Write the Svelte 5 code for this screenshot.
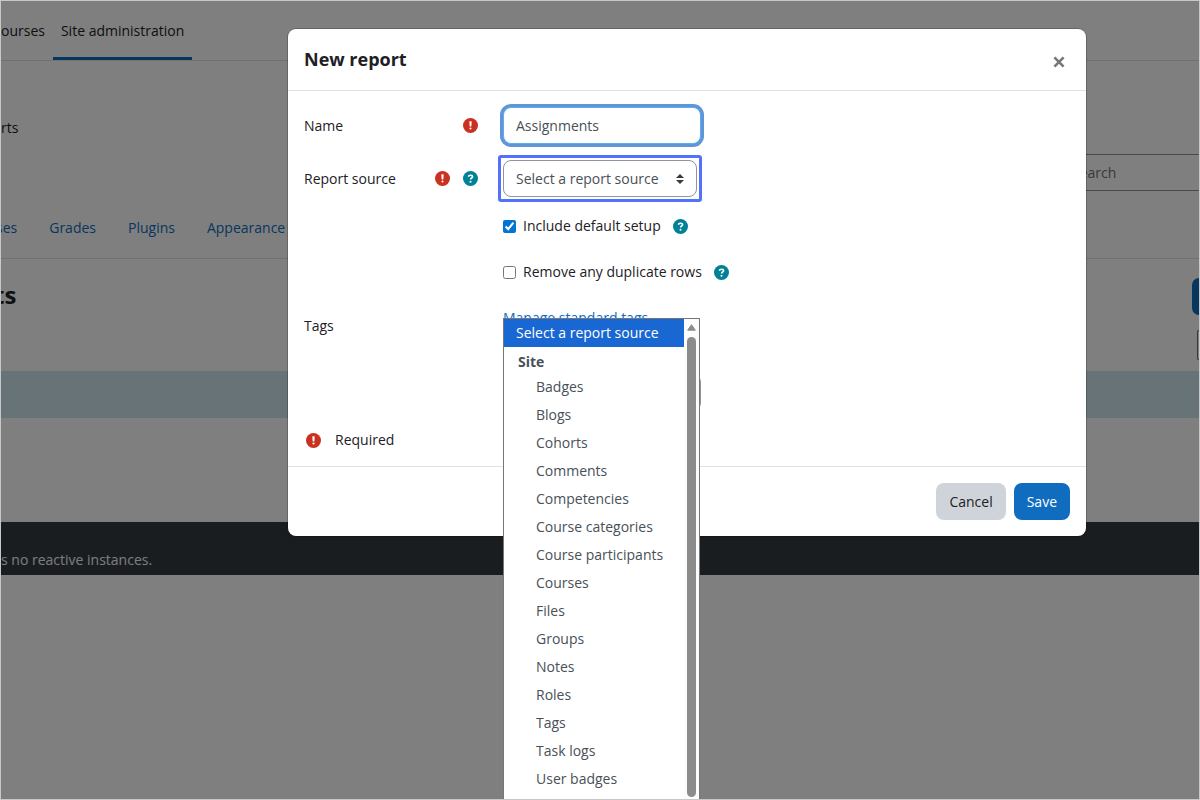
<script>
  const sources = [
    'Badges', 'Blogs', 'Cohorts', 'Comments', 'Competencies',
    'Course categories', 'Course participants', 'Courses', 'Files',
    'Groups', 'Notes', 'Roles', 'Tags', 'Task logs', 'User badges'
  ];
  let name = $state('Assignments');
  let includeDefaults = $state(true);
  let uniqueRows = $state(false);
</script>

{#snippet required()}
  <svg class="icon required" viewBox="0 0 16 16" role="img" aria-label="Required">
    <circle cx="8" cy="8" r="8" />
    <path d="M7 3.8h2l-.3 5H7.3z" fill="#fff" stroke="#fff" stroke-width=".4" stroke-linejoin="round" />
    <circle cx="8" cy="11.2" r="1.1" fill="#fff" />
  </svg>
{/snippet}

{#snippet help(topic)}
  <button type="button" class="help" aria-label={topic}>
    <svg class="icon" viewBox="0 0 16 16" aria-hidden="true">
      <circle cx="8" cy="8" r="8" />
      <path d="M5.9 6.2C5.9 5.2 6.7 4.6 8 4.6s2.2.6 2.2 1.6c0 1.3-2.1 1.3-2.1 2.8" fill="none" stroke="#fff" stroke-width="1.7" />
      <circle cx="8" cy="11.5" r="1.1" fill="#fff" />
    </svg>
  </button>
{/snippet}

<div class="frame">
  <div class="page">
    <header class="topbar">
      <nav>
        <a href="#courses">ourses</a>
        <a href="#admin" class="active">Site administration</a>
      </nav>
    </header>
    <div class="crumbs">rts</div>
    <div class="search"><input type="search" placeholder="Search" aria-label="Search" /></div>
    <nav class="tabs">
      <a href="#ses">ses</a>
      <a href="#grades">Grades</a>
      <a href="#plugins">Plugins</a>
      <a href="#appearance">Appearance</a>
    </nav>
    <main>
      <div class="heading">
        <h1>ts</h1>
        <div class="actions">
          <button type="button" class="new" aria-label="New report"></button>
          <button type="button" class="filters" aria-label="Filters"></button>
        </div>
      </div>
      <div class="notice"></div>
    </main>
    <footer class="debug">s no reactive instances.</footer>
  </div>

  <div class="backdrop">
    <div class="modal" role="dialog" aria-labelledby="modal-title">
      <header class="modal-header">
        <h2 id="modal-title">New report</h2>
        <button type="button" class="close" aria-label="Close">
          <svg viewBox="0 0 12 12" aria-hidden="true"><path d="M1.4 1.4l9.2 9.2M10.6 1.4l-9.2 9.2" /></svg>
        </button>
      </header>

      <form class="modal-body">
        <div class="row">
          <div class="label"><label for="name">Name</label>{@render required()}</div>
          <input id="name" class="control focused" type="text" bind:value={name} />
        </div>
        <div class="row">
          <div class="label">
            <label for="source">Report source</label>
            {@render required()}
            {@render help('Help with report source')}
          </div>
          <div class="picker">
            <select id="source" class="control">
              <option>Select a report source</option>
              <optgroup label="Site">
                {#each sources as source}<option>{source}</option>{/each}
              </optgroup>
            </select>
            <svg class="carets" viewBox="0 0 8 10" aria-hidden="true"><path d="M4 0l4 4H0zM4 10L0 6h8z" /></svg>
            <div class="popup">
              <ul>
                <li class="selected">Select a report source</li>
                <li class="group">Site</li>
                {#each sources as source}<li class="item">{source}</li>{/each}
              </ul>
              <div class="scrollbar">
                <svg viewBox="0 0 9 7" aria-hidden="true"><path d="M4.5 .7L8.3 6.2H.7z" stroke-width="1" stroke-linejoin="round" /></svg>
                <div class="thumb"></div>
              </div>
            </div>
          </div>
        </div>
        <div class="row check">
          <input id="defaults" type="checkbox" bind:checked={includeDefaults} />
          <label for="defaults">Include default setup</label>
          {@render help('Help with default setup')}
        </div>
        <div class="row check">
          <input id="unique" type="checkbox" bind:checked={uniqueRows} />
          <label for="unique">Remove any duplicate rows</label>
          {@render help('Help with duplicate rows')}
        </div>
        <div class="row tags">
          <div class="label"><label for="tags">Tags</label></div>
          <div class="tag-field">
            <a href="#tags">Manage standard tags</a>
            <input id="tags" class="control" type="text" />
          </div>
        </div>
        <div class="legend">{@render required()}<span>Required</span></div>
      </form>

      <footer class="modal-footer">
        <button type="button" class="btn">Cancel</button>
        <button type="button" class="btn primary">Save</button>
      </footer>
    </div>
  </div>
</div>

<style>
  :global(body) {
    margin: 0;
    font-family: "Open Sans", "Noto Sans", sans-serif;
    font-size: 14px;
    line-height: 26px;
    color: #1d2125;
  }
  * { box-sizing: border-box; }
  button, input, select { font: inherit; color: inherit; margin: 0; }
  a { color: #0f6cbf; text-decoration: none; }
  h1, h2, ul { margin: 0; padding: 0; }

  .frame {
    position: relative;
    display: flex;
    height: 100vh;
    border: 1px solid #c8c8c8;
    overflow: hidden;
  }
  .page { flex: 1; min-width: 0; background: #fff; }

  .topbar { height: 60px; border-bottom: 1px solid #dee2e6; }
  .topbar nav { display: flex; height: 100%; }
  .topbar a { padding: 17px 8px 0; color: #1d2125; }
  .topbar a:first-child { padding-left: 0; }
  .topbar .active { border-bottom: 3px solid #0f6cbf; }
  .crumbs { padding: 54px 0 13px; }
  .search { display: flex; justify-content: flex-end; }
  .search input {
    width: 140px;
    height: 37px;
    padding: 0 13px;
    border: 1px solid #8f959e;
    border-width: 1px 0;
    background: #fff;
    outline: none;
  }
  .search input::placeholder { color: #6a737b; opacity: 1; }
  .tabs {
    display: flex;
    gap: 32px;
    margin-left: -5px;
    padding: 24px 0 17px;
    border-bottom: 1px solid #dee2e6;
  }
  .heading { display: flex; justify-content: space-between; height: 112px; padding-top: 19px; }
  h1 { margin-left: -7px; font-size: 24px; line-height: 34px; }
  .actions { display: flex; flex-direction: column; align-items: flex-end; gap: 15px; }
  .actions button { padding: 0; }
  .new { width: 7px; height: 37px; border: 0; border-radius: 8px 0 0 8px; background: #0f6cbf; }
  .filters {
    width: 2px;
    height: 30px;
    border: 1px solid #6a737b;
    border-right: 0;
    border-radius: 6px 0 0 6px;
    background: #fff;
  }
  .notice { height: 47px; background: #cee6ee; }
  .debug { margin-top: 104px; padding: 25px 0 2px; background: #343a40; color: #f8f9fa; }

  .backdrop {
    position: absolute;
    inset: 0;
    padding: 28px 113px 0 287px;
    background: rgba(0, 0, 0, .5);
  }
  .modal {
    border-radius: 8px;
    background: #fff;
    box-shadow: 0 0 0 1px rgba(0, 0, 0, .2);
  }
  .modal-header {
    display: flex;
    align-items: flex-start;
    justify-content: space-between;
    height: 62px;
    padding: 16px 20px 0 16px;
    border-bottom: 1px solid #dee2e6;
  }
  h2 { font-size: 18px; line-height: 28px; }
  .close { display: flex; padding: 11px 0 0; border: 0; background: none; }
  .close svg { width: 14px; height: 12px; stroke: #777; stroke-width: 2.6; }

  .modal-body { padding: 16px 16px 13px; }
  .row { display: flex; align-items: center; margin-bottom: 16px; }
  .label { display: flex; align-items: center; gap: 13px; width: 199px; padding-right: 25px; }
  .label label { margin-right: auto; }
  .icon { display: block; width: 15px; height: 15px; fill: #008196; }
  .required { fill: #ca3120; }
  .help { padding: 0; border: 0; background: none; }
  .control {
    width: 198px;
    height: 37px;
    padding: 0 12px;
    border: 1px solid #8f959e;
    border-radius: 8px;
    background: #fff;
    color: #495057;
    outline: none;
    appearance: none;
  }
  .focused { border-color: #5eaaf5; box-shadow: 0 0 0 3px #5e96d6; }

  .picker { position: relative; display: flex; }
  .picker .control { width: 194px; }
  .picker::before {
    content: "";
    position: absolute;
    inset: -5px;
    border: 3px solid #5271ff;
    border-radius: 3px;
    pointer-events: none;
  }
  .carets {
    position: absolute;
    top: 14px;
    right: 13px;
    width: 8px;
    height: 10px;
    fill: #343a40;
    pointer-events: none;
  }
  .popup {
    position: absolute;
    z-index: 2;
    top: 158px;
    left: 0;
    display: flex;
    width: 197px;
    border: 1px solid #767676;
    border-bottom: 0;
    background: #fff;
    color: #495057;
  }
  ul { flex: 1; padding-bottom: 8px; list-style: none; line-height: 28px; white-space: nowrap; }
  .selected { padding-left: 12px; background: #1967d2; color: #fff; }
  .group { padding: 4px 0 0 14px; font-weight: 700; line-height: 22px; }
  .item { padding-left: 32px; }
  .scrollbar {
    display: flex;
    flex-direction: column;
    align-items: center;
    gap: 6px;
    width: 15px;
    padding: 5px 0 4px;
    background: #fcfcfc;
  }
  .scrollbar svg { width: 9px; height: 7px; fill: #8b8b8b; stroke: #8b8b8b; }
  .thumb { flex: 1; width: 9px; border-radius: 5px; background: #8b8b8b; }

  .check { margin-bottom: 20px; padding-left: 199px; }
  .check input { width: 13px; height: 13px; margin-right: 7px; accent-color: #0075d5; }
  .check label { margin-right: 12px; }
  .tags { align-items: flex-start; }
  .tags .label { padding-top: 8px; }
  .tag-field { display: flex; flex-direction: column; gap: 43px; }
  .legend { display: flex; align-items: center; gap: 14px; padding-left: 2px; }

  .modal-footer {
    display: flex;
    justify-content: flex-end;
    gap: 8px;
    padding: 16px;
    border-top: 1px solid #dee2e6;
  }
  .btn {
    height: 37px;
    padding: 0 13px;
    border: 0;
    border-radius: 8px;
    background: #ced4da;
  }
  .primary { background: #0f6cbf; color: #fff; }
</style>
